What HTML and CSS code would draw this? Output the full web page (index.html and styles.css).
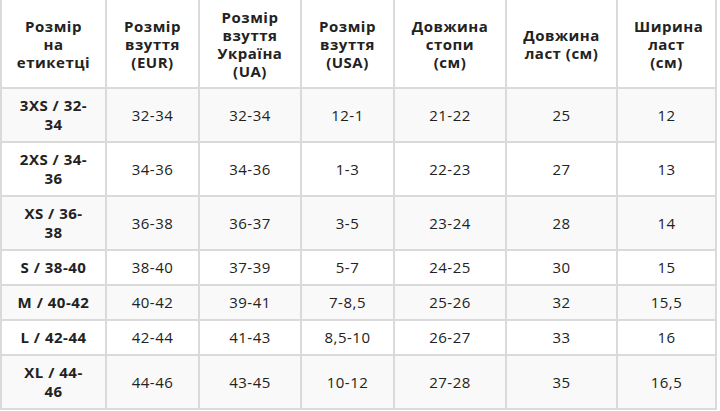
FILE: index.html
```html
<!DOCTYPE html>
<html>
<head>
<meta charset="utf-8">
<link rel="stylesheet" href="styles.css">
</head>
<body>
<table class="sizes">
  <thead>
    <tr>
      <th class="c1">Розмір на етикетці</th>
      <th class="c2">Розмір взуття (EUR)</th>
      <th class="c3">Розмір взуття Україна (UA)</th>
      <th class="c4">Розмір взуття (USA)</th>
      <th class="c5">Довжина стопи (см)</th>
      <th class="c6">Довжина ласт (см)</th>
      <th class="c7">Ширина ласт (см)</th>
    </tr>
  </thead>
  <tbody>
    <tr class="alt"><td class="lbl">3XS / 32-34</td><td>32-34</td><td>32-34</td><td>12-1</td><td>21-22</td><td>25</td><td>12</td></tr>
    <tr><td class="lbl">2XS / 34-36</td><td>34-36</td><td>34-36</td><td>1-3</td><td>22-23</td><td>27</td><td>13</td></tr>
    <tr class="alt"><td class="lbl">XS / 36-38</td><td>36-38</td><td>36-37</td><td>3-5</td><td>23-24</td><td>28</td><td>14</td></tr>
    <tr><td class="lbl">S / 38-40</td><td>38-40</td><td>37-39</td><td>5-7</td><td>24-25</td><td>30</td><td>15</td></tr>
    <tr class="alt"><td class="lbl">M / 40-42</td><td>40-42</td><td>39-41</td><td>7-8,5</td><td>25-26</td><td>32</td><td>15,5</td></tr>
    <tr><td class="lbl">L / 42-44</td><td>42-44</td><td>41-43</td><td>8,5-10</td><td>26-27</td><td>33</td><td>16</td></tr>
    <tr class="alt"><td class="lbl">XL / 44-46</td><td>44-46</td><td>43-45</td><td>10-12</td><td>27-28</td><td>35</td><td>16,5</td></tr>
  </tbody>
</table>
</body>
</html>
```
FILE: styles.css
```css
html, body {
  margin: 0;
  padding: 0;
  background: #ffffff;
}
body {
  font-family: "Open Sans", "Liberation Sans", sans-serif;
  color: #222222;
}
.sizes {
  border-collapse: separate;
  border-spacing: 0;
  table-layout: fixed;
  width: 717px;
}
.sizes th,
.sizes td {
  box-sizing: border-box;
  border-right: 2px solid #dadada;
  border-bottom: 2px solid #dadada;
  text-align: center;
  vertical-align: middle;
  padding: 7px 16px;
  font-size: 15px;
  letter-spacing: 0.5px;
}
.sizes th:first-child,
.sizes td:first-child {
  border-left: 2px solid #dadada;
  padding-left: 14px;
  padding-right: 14px;
}
.sizes th {
  font-weight: 700;
  line-height: 18px;
  padding-top: 8px;
  padding-bottom: 7px;
  background: #ffffff;
}
.sizes td {
  font-weight: 400;
  line-height: 19px;
}
.sizes td.lbl {
  font-weight: 700;
}
.sizes tr.alt td {
  background: #f9f9f9;
}
.c1 { width: 107px; }
.c2 { width: 93px; }
.c3 { width: 102px; }
.c4 { width: 93px; }
.c5 { width: 112px; }
.c6 { width: 111px; }
.c7 { width: 99px; }
```
